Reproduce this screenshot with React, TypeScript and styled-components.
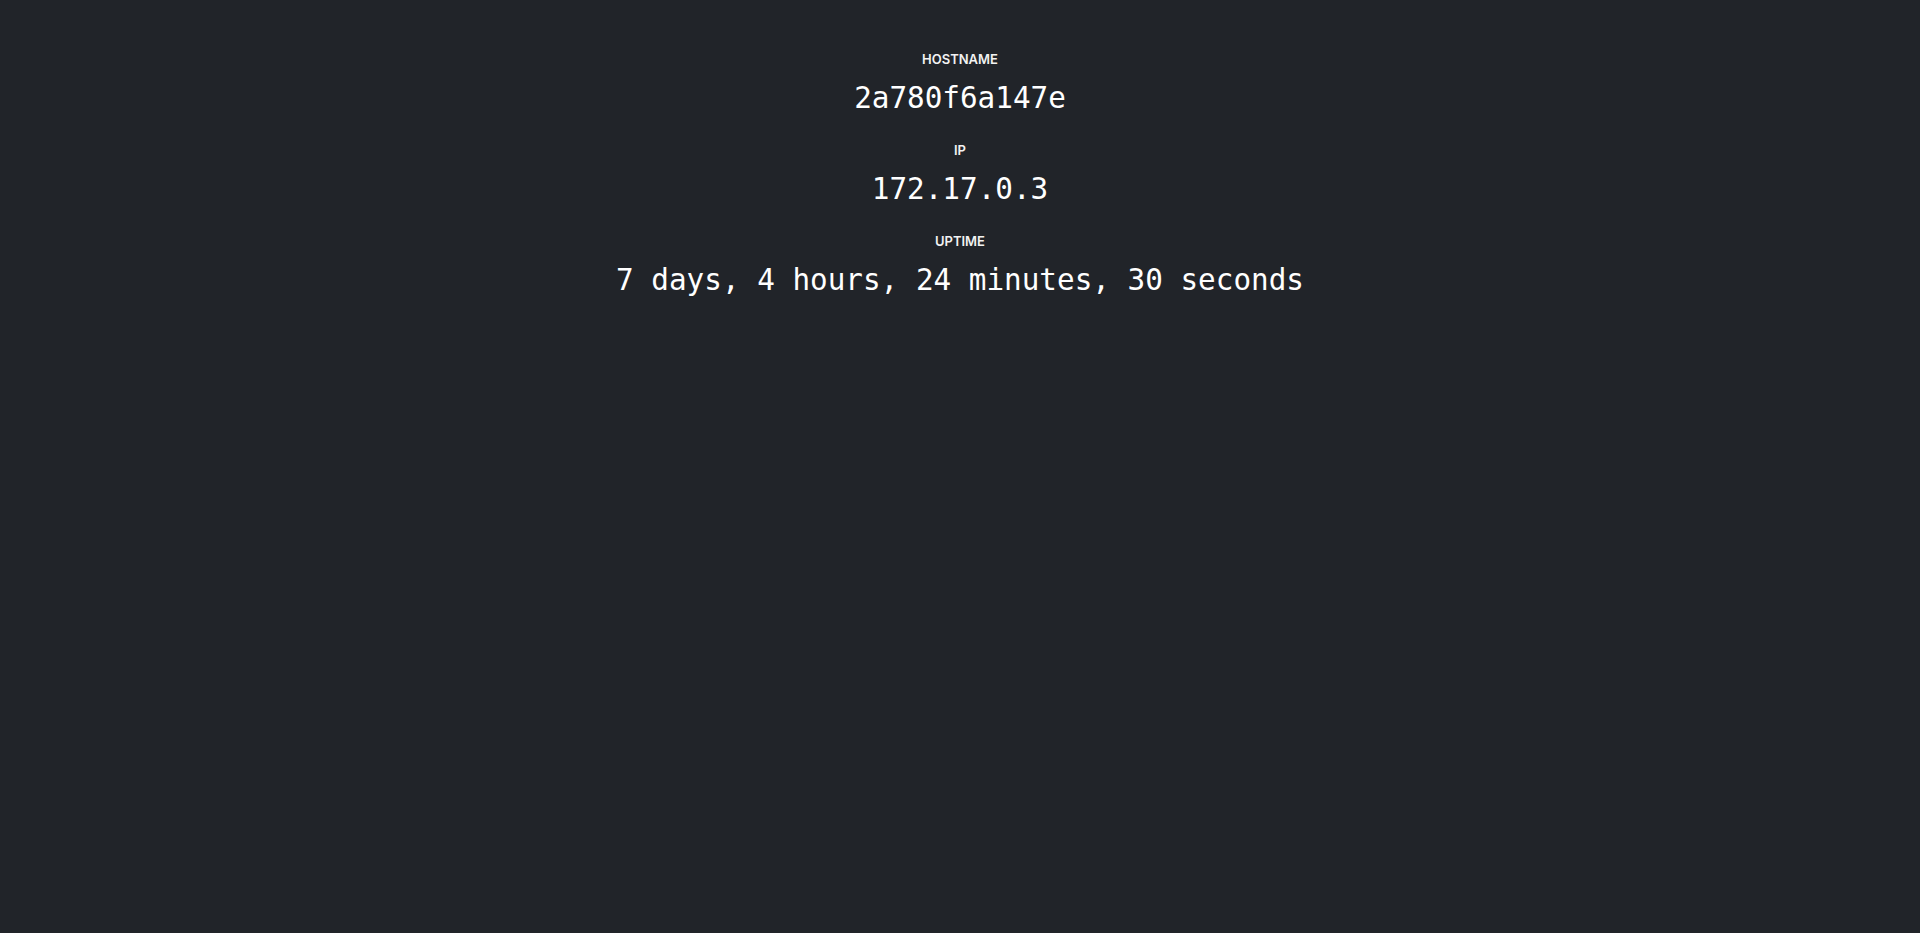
import React from "react";
import styled, { createGlobalStyle } from "styled-components";

const Global = createGlobalStyle`
  html, body { margin: 0; padding: 0; background: #212429; }
  body { min-height: 100vh; }
`;

const Page = styled.main`
  min-height: 100vh;
  background: #212429;
  color: #ffffff;
  display: flex;
  flex-direction: column;
  align-items: center;
  padding-top: 50px;
  box-sizing: border-box;
`;

const Item = styled.section`
  display: flex;
  flex-direction: column;
  align-items: center;
  margin-bottom: 22px;
`;

const Label = styled.h2`
  margin: 0;
  font-family: Inter, "Noto Sans", sans-serif;
  font-weight: 600;
  font-size: 13px;
  line-height: 18px;
  letter-spacing: 0;
  text-transform: uppercase;
  color: #f2f2f2;
`;

const Value = styled.div`
  margin-top: 9px;
  font-family: "DejaVu Sans Mono", monospace;
  font-size: 29.3px;
  line-height: 42px;
  color: #ffffff;
`;

const data = [
  { label: "Hostname", value: "2a780f6a147e" },
  { label: "IP", value: "172.17.0.3" },
  { label: "Uptime", value: "7 days, 4 hours, 24 minutes, 30 seconds" },
];

export default function App() {
  return (
    <>
      <Global />
      <Page>
        {data.map((d) => (
          <Item key={d.label}>
            <Label>{d.label}</Label>
            <Value>{d.value}</Value>
          </Item>
        ))}
      </Page>
    </>
  );
}
